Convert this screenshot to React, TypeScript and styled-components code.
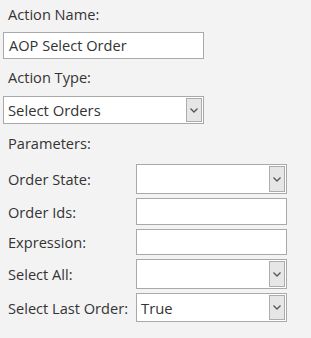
import React from "react";
import styled, { createGlobalStyle } from "styled-components";

const Global = createGlobalStyle`
  html, body { margin: 0; padding: 0; background: #f3f3f3; }
  body { font-family: "Open Sans", "Noto Sans", sans-serif; color: #333; }
`;

const Page = styled.div`
  width: 311px;
  height: 338px;
  box-sizing: border-box;
  padding: 4px 0 0 3px;
  display: flex;
  flex-direction: column;
`;

const Label = styled.div<{ $mt?: number; $mb?: number }>`
  height: 20px;
  line-height: 20px;
  font-size: 14.6px;
  padding-left: 5px;
  margin-top: ${(p) => p.$mt ?? 0}px;
  margin-bottom: ${(p) => p.$mb ?? 0}px;
  color: #333;
  white-space: nowrap;
`;

const TextBox = styled.div<{ $w: number; $h: number }>`
  box-sizing: border-box;
  width: ${(p) => p.$w}px;
  height: ${(p) => p.$h}px;
  background: #fff;
  border: 1px solid #a9a9a9;
  font-size: 14.6px;
  line-height: ${(p) => p.$h - 2}px;
  padding-left: 5px;
  color: #333;
  white-space: nowrap;
`;

const SelectBox = styled.div<{ $w: number; $h: number }>`
  box-sizing: border-box;
  width: ${(p) => p.$w}px;
  height: ${(p) => p.$h}px;
  background: #fff;
  border: 1px solid #a9a9a9;
  display: flex;
  align-items: stretch;
  padding: 1px;
  font-size: 14.8px;
  color: #333;
`;

const SelectText = styled.div`
  flex: 1;
  display: flex;
  align-items: center;
  padding-left: 3px;
  white-space: nowrap;
`;

const DropButton = styled.div`
  box-sizing: border-box;
  width: 16px;
  background: #e6e6e6;
  border: 1px solid #acacac;
  display: flex;
  align-items: center;
  justify-content: center;
`;

const Params = styled.div`
  display: grid;
  grid-template-columns: 133px 151px;
  row-gap: 4px;
  margin-top: 11px;
  align-items: center;
`;

const ParamLabel = styled.div`
  font-size: 14.6px;
  padding-left: 5px;
  color: #333;
  white-space: nowrap;
`;

const Chevron = () => (
  <svg width="8" height="5" viewBox="0 0 8 5">
    <path d="M0.5 0.5 L4 4 L7.5 0.5" fill="none" stroke="#555" strokeWidth="1.3" />
  </svg>
);

const Select = ({ w, h, value }: { w: number; h: number; value?: string }) => (
  <SelectBox $w={w} $h={h}>
    <SelectText>{value}</SelectText>
    <DropButton>
      <Chevron />
    </DropButton>
  </SelectBox>
);

export default function App() {
  return (
    <Page>
      <Global />
      <Label $mb={8}>Action Name:</Label>
      <TextBox $w={201} $h={27}>AOP Select Order</TextBox>
      <Label $mt={8} $mb={9}>Action Type:</Label>
      <Select w={201} h={28} value="Select Orders" />
      <Label $mt={9}>Parameters:</Label>
      <Params>
        <ParamLabel>Order State:</ParamLabel>
        <Select w={151} h={30} />
        <ParamLabel>Order Ids:</ParamLabel>
        <TextBox $w={151} $h={27} />
        <ParamLabel>Expression:</ParamLabel>
        <TextBox $w={151} $h={26} />
        <ParamLabel>Select All:</ParamLabel>
        <Select w={151} h={30} />
        <ParamLabel>Select Last Order:</ParamLabel>
        <Select w={151} h={29} value="True" />
      </Params>
    </Page>
  );
}
